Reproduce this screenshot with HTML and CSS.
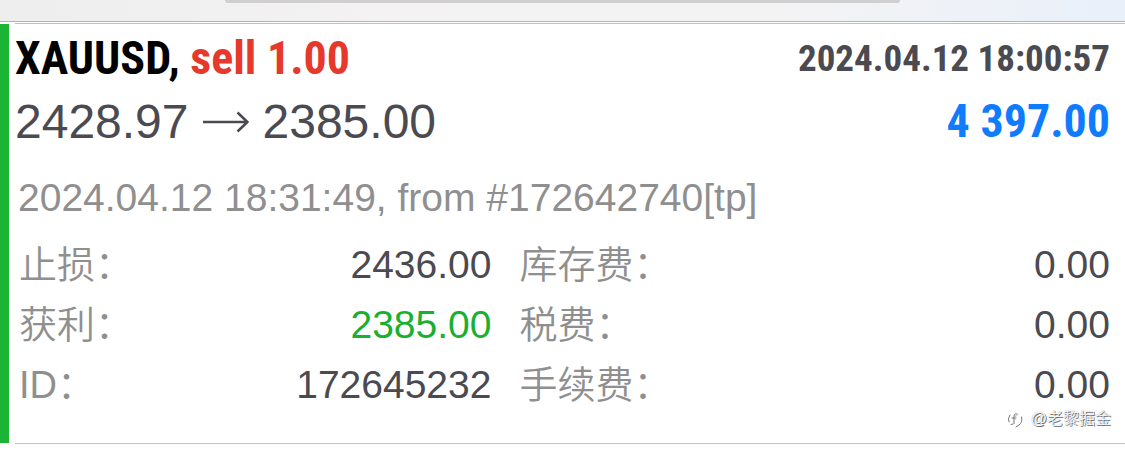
FILE: index.html
```html
<!DOCTYPE html>
<html lang="zh-CN">
<head>
<meta charset="utf-8">
<meta name="viewport" content="width=device-width, initial-scale=1">
<title>XAUUSD, sell 1.00</title>
<link rel="stylesheet" href="styles.css">
</head>
<body>
<header class="toolbar"><div class="segment"></div></header>
<main>
  <article class="deal">
    <div class="stripe"></div>
    <div class="deal-body">
      <div class="row">
        <h1 class="symbol">XAUUSD, <span class="side">sell 1.00</span></h1>
        <time class="closed">2024.04.12 18:00:57</time>
      </div>
      <div class="row">
        <p class="prices">
          <span>2428.97</span>
          <svg class="arrow" viewBox="0 0 46 24" role="img" aria-label="→"><path d="M0 12H44M34.500 2.500L44.500 12L34.500 21.500" fill="none" stroke="currentColor" stroke-width="2.600"/></svg>
          <span>2385.00</span>
        </p>
        <strong class="profit">4 397.00</strong>
      </div>
      <p class="note">2024.04.12 18:31:49, from #172642740[tp]</p>
      <dl class="details">
        <div class="item"><dt>止损：</dt><dd>2436.00</dd></div>
        <div class="item"><dt>库存费：</dt><dd>0.00</dd></div>
        <div class="item"><dt>获利：</dt><dd class="hit">2385.00</dd></div>
        <div class="item"><dt>税费：</dt><dd>0.00</dd></div>
        <div class="item"><dt>ID：</dt><dd>172645232</dd></div>
        <div class="item"><dt>手续费：</dt><dd>0.00</dd></div>
      </dl>
      <div class="watermark">
        <svg class="mark" viewBox="0 0 16 18" aria-hidden="true"><g fill="none" stroke-linecap="round"><path d="M3 5Q0 9 2 12M4 14.500L6 14M14.500 7Q16 12 12 15L9 17M7 13.500V6Q7.500 3 10 4M5 8H9" stroke="#777" stroke-width="1"/><path d="M11 4.500Q8.500 4 8.500 7V9" stroke="#bbb" stroke-width="1"/></g></svg>
        <span>@老黎掘金</span>
      </div>
    </div>
  </article>
</main>
</body>
</html>
```
FILE: styles.css
```css
* { box-sizing: border-box; }

body {
  margin: 0;
  background: #fff;
  color: #4a4a50;
  font-family: "Liberation Sans", "Noto Sans CJK SC", sans-serif;
}

h1, p, dl, dd { margin: 0; }

.toolbar {
  height: 22px;
  margin-bottom: 1px;
  border-bottom: 1px solid #b2b2b2;
  background: linear-gradient(90deg, #eeeeef 0%, #f4f2f3 35%, #f3f3f4 70%, #e9f0fa 100%);
}

.segment {
  width: 60%;
  height: 3px;
  margin: 0 auto;
  border-radius: 0 0 12px 12px;
  background: #d0cfd0;
}

.deal { display: flex; }

.stripe {
  flex: none;
  width: 9px;
  margin: 1px 6px 1px 0;
  background: #1cb434;
}

.deal-body {
  position: relative;
  flex: 1;
  padding: 3px 15px 28px 0;
  border-top: 1px solid #c0c0c0;
  border-bottom: 1px solid #c0c0c0;
}

.row {
  display: flex;
  justify-content: space-between;
  align-items: center;
  line-height: 63px;
}

.symbol, .closed, .profit {
  font-family: "Roboto Condensed", "Liberation Sans Narrow", sans-serif;
  font-weight: 700;
}

.symbol { color: #000; font-size: 46px; }
.side { color: #e6392b; }
.closed { font-size: 37px; }
.profit { color: #0f7bff; font-size: 46px; }

.prices {
  display: flex;
  align-items: center;
  gap: 14px;
  font-size: 48px;
}

.arrow { width: 46px; height: 24px; }

.note {
  margin: 15px 0 7px 3px;
  color: #8f8f8f;
  font-size: 39px;
  line-height: 60px;
}

.details {
  display: grid;
  grid-template-columns: 4fr 5fr;
  column-gap: 28px;
  margin-left: 4px;
  font-size: 39px;
  line-height: 60px;
}

.item {
  display: flex;
  justify-content: space-between;
  height: 60px;
}

dt { color: #8f8f8f; font-size: 38px; font-weight: 350; }
.hit { color: #18b02e; }

.watermark {
  position: absolute;
  right: 14px;
  bottom: 12px;
  display: flex;
  align-items: center;
  gap: 8px;
  color: #fff;
  font-size: 16px;
  font-weight: 300;
  line-height: 24px;
  text-shadow: 1px 1px 0 #666, 0 0 1px #888;
}

.mark { width: 16px; height: 18px; }
```
